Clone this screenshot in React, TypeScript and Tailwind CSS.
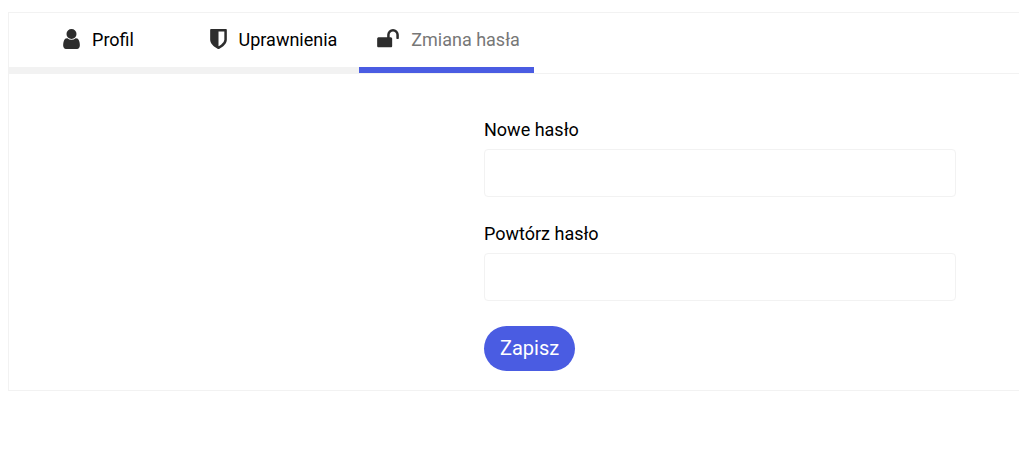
const tabs = [
  {
    id: "profile",
    label: "Profil",
    viewBox: "256 128 1280 1536",
    iconSize: "h-5 w-[17px]",
    path: "M1536 1399q0 109-62.5 187t-150.5 78h-854q-88 0-150.5-78t-62.5-187q0-85 8.5-160.5t31.5-152 58.5-131 94-89 134.5-34.5q131 128 313 128t313-128q76 0 134.5 34.5t94 89 58.5 131 31.5 152 8.5 160.5zm-256-887q0 159-112.5 271.5t-271.5 112.5-271.5-112.5-112.5-271.5 112.5-271.5 271.5-112.5 271.5 112.5 112.5 271.5z",
  },
  {
    id: "permissions",
    label: "Uprawnienia",
    viewBox: "256 128 1280 1536",
    iconSize: "h-5 w-[17px]",
    path: "M1344 960v-640h-448v1137q119-63 213-137 235-184 235-360zm192-768v768q0 86-33.5 170.5t-83 150-118 127.5-126.5 103-121 77.5-89.5 49.5-42.5 20q-12 6-26 6t-26-6q-16-7-42.5-20t-89.5-49.5-121-77.5-126.5-103-118-127.5-83-150-33.5-170.5v-768q0-26 19-45t45-19h1152q26 0 45 19t19 45z",
  },
  {
    id: "password",
    label: "Zmiana hasła",
    viewBox: "64 128 1664 1536",
    iconSize: "h-5 w-[22px]",
    path: "M1728 576v256q0 26-19 45t-45 19h-64q-26 0-45-19t-19-45v-256q0-106-75-181t-181-75-181 75-75 181v192h96q40 0 68 28t28 68v576q0 40-28 68t-68 28h-960q-40 0-68-28t-28-68v-576q0-40 28-68t68-28h672v-192q0-185 131.5-316.5t316.5-131.5 316.5 131.5 131.5 316.5z",
  },
];

const fields = [
  { id: "new-password", label: "Nowe hasło" },
  { id: "repeat-password", label: "Powtórz hasło" },
];

const activeTab = "password";

export default function App() {
  return (
    <main className="pt-3 pl-2 font-[Roboto,sans-serif] text-lg leading-6 text-black">
      <section className="border-y border-l border-[#f2f2f2]">
        {/* Tabs */}
        <div role="tablist" className="flex border-b border-[#f2f2f2]">
          {tabs.map((tab) => {
            const active = tab.id === activeTab;
            return (
              <button
                key={tab.id}
                type="button"
                role="tab"
                aria-selected={active}
                className={`flex h-[60px] w-[175px] items-center justify-center gap-3 border-b-[6px] pl-1 ${
                  active
                    ? "border-[#4a5ce2] text-[#777777]"
                    : "border-[#f2f2f2]"
                }`}
              >
                <svg
                  viewBox={tab.viewBox}
                  className={`mb-0.5 flex-shrink-0 fill-[#2d2d2d] ${tab.iconSize}`}
                  aria-hidden="true"
                >
                  <path d={tab.path} />
                </svg>
                {tab.label}
              </button>
            );
          })}
        </div>

        {/* Password form */}
        <form className="pt-11 pr-[63px] pb-[19px] pl-[475px]">
          {fields.map((field) => (
            <div key={field.id} className="mb-[25px]">
              <label htmlFor={field.id} className="mb-[7px] block">
                {field.label}
              </label>
              <input
                id={field.id}
                type="password"
                className="block h-12 w-full rounded border border-[#f2f2f2] bg-white px-3 outline-none"
              />
            </div>
          ))}
          <button
            type="button"
            className="block h-[45px] rounded-full bg-[#4a5ce2] px-4 pb-0.5 text-xl text-white"
          >
            Zapisz
          </button>
        </form>
      </section>
    </main>
  );
}
